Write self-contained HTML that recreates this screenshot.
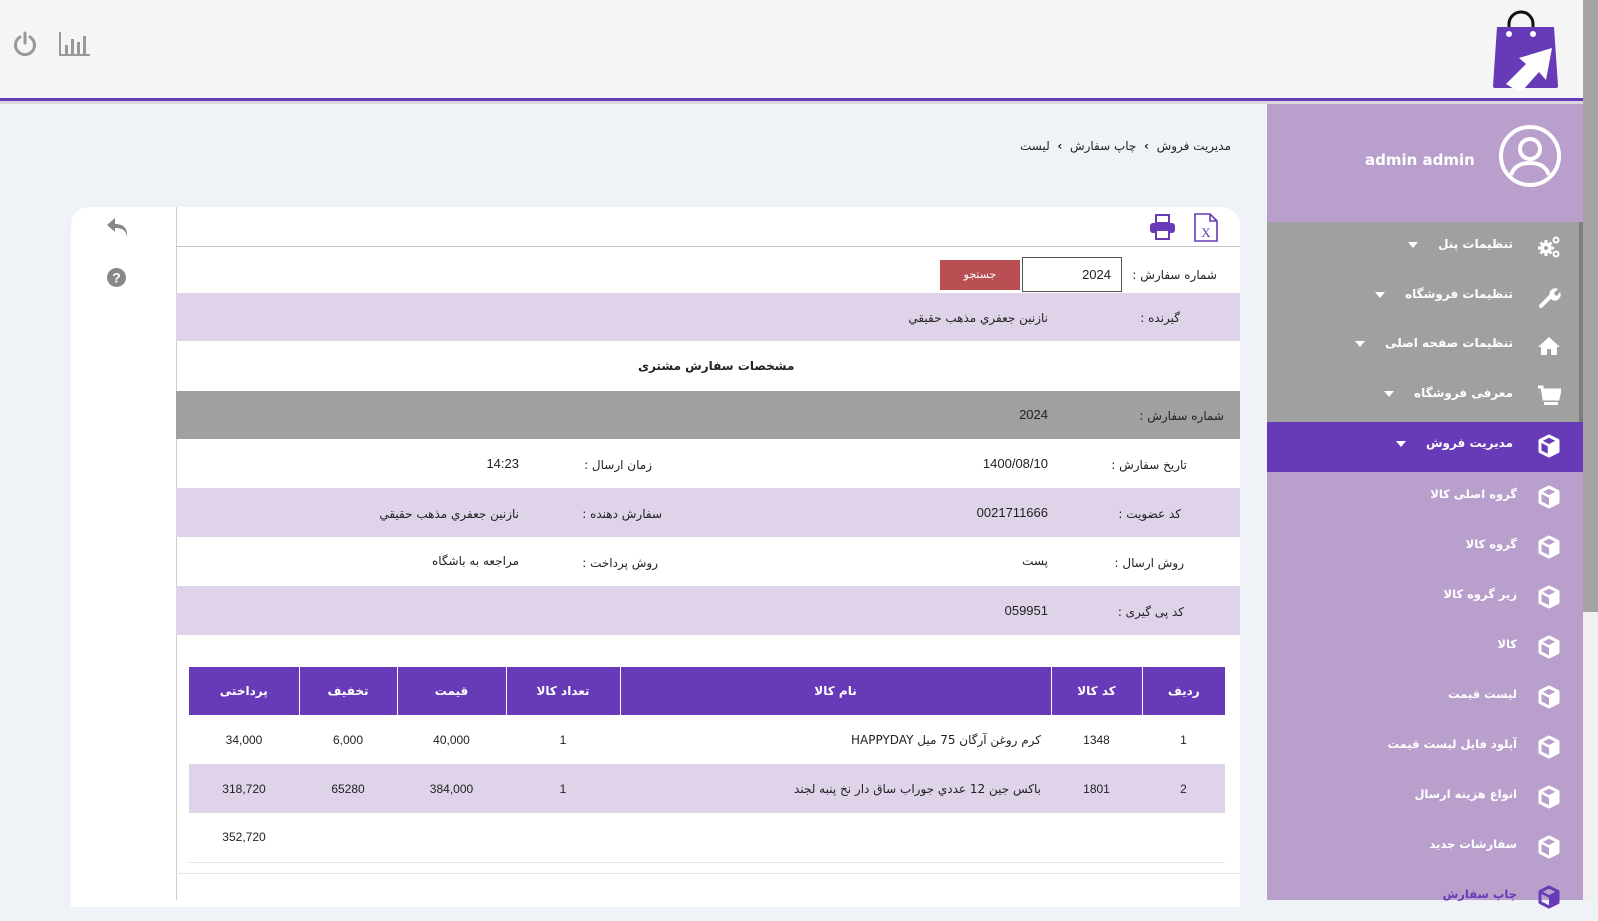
<!DOCTYPE html>
<html><head><meta charset="utf-8"><style>
*{margin:0;padding:0;box-sizing:border-box}
body{width:1598px;height:900px;overflow:hidden;background:#eff2f7;font-family:"DejaVu Sans","Liberation Sans",sans-serif;font-size:12px;color:#222;position:relative}
.a{position:absolute}
.t{position:absolute;white-space:nowrap;direction:rtl}
.r{position:absolute;left:176px;width:1064px}
.lav{background:#ded3e8}
.mi{position:absolute;left:1267px;width:316px;height:50px;color:#fff;font-weight:bold;font-size:12px}
.mi .tx{position:absolute;right:70px;top:16px;direction:rtl;white-space:nowrap}
.mi svg{position:absolute;right:22px;top:14px}
.car{display:inline-block;vertical-align:middle;margin-right:20px;width:0;height:0;border-left:5px solid transparent;border-right:5px solid transparent;border-top:6px solid #fff}
.sub .tx{font-size:11.5px;right:66px}
th,td{font-size:12px}
</style></head><body>
<div class="a" style="left:0;top:0;width:1583px;height:98px;background:#f5f5f5"></div>
<div class="a" style="left:0;top:98px;width:1583px;height:3px;background:#673ab7"></div>
<div class="a" style="left:0;top:101px;width:1583px;height:3px;background:#d6d6dc"></div>
<svg class="a" style="left:12px;top:31px" width="26" height="26" viewBox="0 0 26 26"><path d="M8 6A9.5 9.5 0 1 0 18 6" fill="none" stroke="#999" stroke-width="3" stroke-linecap="round"/><line x1="13" y1="2" x2="13" y2="12" stroke="#999" stroke-width="3" stroke-linecap="round"/></svg>
<svg class="a" style="left:59px;top:31px" width="32" height="26" viewBox="0 0 32 26"><path d="M1 1V24H31" fill="none" stroke="#999" stroke-width="2"/><rect x="6" y="14" width="3" height="9" fill="#999"/><rect x="12" y="8" width="3" height="15" fill="#999"/><rect x="18" y="11" width="3" height="12" fill="#999"/><rect x="24" y="5" width="3" height="18" fill="#999"/></svg>
<svg class="a" style="left:1490px;top:10px" width="72" height="80" viewBox="0 0 72 80"><path d="M19 24V14a12 12 0 0 1 24 0V24" fill="none" stroke="#111" stroke-width="3"/><path d="M7 17H64L68 76Q68 78 66 78H5Q3 78 3 76Z" fill="#673ab7"/><circle cx="19" cy="24" r="3" fill="#fff"/><circle cx="43" cy="24" r="3" fill="#fff"/><path d="M16 74L36 54 29 48 62 38 56 70 49 62 33 80 26 80Z" fill="#fff"/></svg>
<div class="a" style="left:1583px;top:0;width:15px;height:900px;background:#f0f0f0"></div>
<div class="a" style="left:1583px;top:0;width:15px;height:612px;background:#a3a3a3"></div>
<div class="a" style="left:1267px;top:104px;width:316px;height:118px;background:#b9a0cc"></div>
<div class="t" style="left:1365px;top:151px;color:#fff;font-weight:bold;font-size:15px;direction:ltr">admin admin</div>
<svg class="a" style="left:1499px;top:125px" width="62" height="62" viewBox="0 0 62 62"><circle cx="31" cy="31" r="29" fill="none" stroke="#fff" stroke-width="4"/><circle cx="31" cy="24" r="10" fill="none" stroke="#fff" stroke-width="4"/><path d="M12 50Q16 38 31 38Q46 38 50 50" fill="none" stroke="#fff" stroke-width="4"/></svg>
<div class="a" style="left:1267px;top:222px;width:316px;height:200px;background:#a0a0a0"></div>
<div class="a" style="left:1579px;top:222px;width:4px;height:200px;background:#7d7d7d"></div>
<div class="a" style="left:1267px;top:422px;width:316px;height:50px;background:#673ab7"></div>
<div class="a" style="left:1267px;top:472px;width:316px;height:428px;background:#b9a0cc"></div>

<div class="mi" style="top:221px"><svg width="24" height="24" viewBox="0 0 24 24"><circle cx="9" cy="13" r="5.5" fill="#fff"/><g stroke="#fff" stroke-width="3"><line x1="9" y1="5" x2="9" y2="21"/><line x1="1" y1="13" x2="17" y2="13"/><line x1="3.5" y1="7.5" x2="14.5" y2="18.5"/><line x1="14.5" y1="7.5" x2="3.5" y2="18.5"/></g><circle cx="9" cy="13" r="2" fill="#a0a0a0"/><circle cx="19" cy="5" r="2.5" fill="none" stroke="#fff" stroke-width="2"/><circle cx="19" cy="19" r="2.5" fill="none" stroke="#fff" stroke-width="2"/></svg><span class="tx">تنظیمات پنل<span class="car"></span></span></div>
<div class="mi" style="top:271px"><svg width="24" height="24" viewBox="0 0 24 24"><path d="M4 21L13 12" stroke="#fff" stroke-width="4" stroke-linecap="round"/><path d="M13 12a6 6 0 0 1 8-8l-4 4 1 2 2 1 3-4a6 6 0 0 1-8 8" fill="#fff"/></svg><span class="tx">تنظیمات فروشگاه<span class="car"></span></span></div>
<div class="mi" style="top:320px"><svg width="24" height="24" viewBox="0 0 24 24"><path d="M12 3L1 13h3v8h6v-6h4v6h6v-8h3Z" fill="#fff"/></svg><span class="tx">تنظیمات صفحه اصلی<span class="car"></span></span></div>
<div class="mi" style="top:370px"><svg width="24" height="24" viewBox="0 0 24 24"><path d="M1 3h4l2 12h14l2-9H7" fill="none" stroke="#fff" stroke-width="3"/><rect x="7" y="7" width="14" height="7" fill="#fff"/><rect x="7" y="18" width="14" height="3" fill="#fff"/></svg><span class="tx">معرفی فروشگاه<span class="car"></span></span></div>
<div class="mi" style="top:420px"><svg width="24" height="24" viewBox="0 0 24 24"><path d="M12 2L21 6.5V17.5L12 22 3 17.5V6.5Z" fill="none" stroke="#fff" stroke-width="3" stroke-linejoin="round"/><path d="M3.5 7L12 11.5 20.5 7M12 11.5V22" fill="none" stroke="#fff" stroke-width="2.5"/><path d="M12 11.5L20 7.5V17L12 21Z" fill="#fff"/></svg><span class="tx">مدیریت فروش<span class="car"></span></span></div>

<div class="mi sub" style="top:471px"><svg width="24" height="24" viewBox="0 0 24 24"><path d="M12 2L21 6.5V17.5L12 22 3 17.5V6.5Z" fill="none" stroke="#fff" stroke-width="3" stroke-linejoin="round"/><path d="M12 11.5L20 7.5V17L12 21Z" fill="#fff"/><path d="M3.5 7L12 11.5 20.5 7" fill="none" stroke="#fff" stroke-width="2.5"/></svg><span class="tx">گروه اصلی کالا</span></div>
<div class="mi sub" style="top:521px"><svg width="24" height="24" viewBox="0 0 24 24"><path d="M12 2L21 6.5V17.5L12 22 3 17.5V6.5Z" fill="none" stroke="#fff" stroke-width="3" stroke-linejoin="round"/><path d="M12 11.5L20 7.5V17L12 21Z" fill="#fff"/><path d="M3.5 7L12 11.5 20.5 7" fill="none" stroke="#fff" stroke-width="2.5"/></svg><span class="tx">گروه کالا</span></div>
<div class="mi sub" style="top:571px"><svg width="24" height="24" viewBox="0 0 24 24"><path d="M12 2L21 6.5V17.5L12 22 3 17.5V6.5Z" fill="none" stroke="#fff" stroke-width="3" stroke-linejoin="round"/><path d="M12 11.5L20 7.5V17L12 21Z" fill="#fff"/><path d="M3.5 7L12 11.5 20.5 7" fill="none" stroke="#fff" stroke-width="2.5"/></svg><span class="tx">زیر گروه کالا</span></div>
<div class="mi sub" style="top:621px"><svg width="24" height="24" viewBox="0 0 24 24"><path d="M12 2L21 6.5V17.5L12 22 3 17.5V6.5Z" fill="none" stroke="#fff" stroke-width="3" stroke-linejoin="round"/><path d="M12 11.5L20 7.5V17L12 21Z" fill="#fff"/><path d="M3.5 7L12 11.5 20.5 7" fill="none" stroke="#fff" stroke-width="2.5"/></svg><span class="tx">کالا</span></div>
<div class="mi sub" style="top:671px"><svg width="24" height="24" viewBox="0 0 24 24"><path d="M12 2L21 6.5V17.5L12 22 3 17.5V6.5Z" fill="none" stroke="#fff" stroke-width="3" stroke-linejoin="round"/><path d="M12 11.5L20 7.5V17L12 21Z" fill="#fff"/><path d="M3.5 7L12 11.5 20.5 7" fill="none" stroke="#fff" stroke-width="2.5"/></svg><span class="tx">لیست قیمت</span></div>
<div class="mi sub" style="top:721px"><svg width="24" height="24" viewBox="0 0 24 24"><path d="M12 2L21 6.5V17.5L12 22 3 17.5V6.5Z" fill="none" stroke="#fff" stroke-width="3" stroke-linejoin="round"/><path d="M12 11.5L20 7.5V17L12 21Z" fill="#fff"/><path d="M3.5 7L12 11.5 20.5 7" fill="none" stroke="#fff" stroke-width="2.5"/></svg><span class="tx">آپلود فایل لیست قیمت</span></div>
<div class="mi sub" style="top:771px"><svg width="24" height="24" viewBox="0 0 24 24"><path d="M12 2L21 6.5V17.5L12 22 3 17.5V6.5Z" fill="none" stroke="#fff" stroke-width="3" stroke-linejoin="round"/><path d="M12 11.5L20 7.5V17L12 21Z" fill="#fff"/><path d="M3.5 7L12 11.5 20.5 7" fill="none" stroke="#fff" stroke-width="2.5"/></svg><span class="tx">انواع هزینه ارسال</span></div>
<div class="mi sub" style="top:821px"><svg width="24" height="24" viewBox="0 0 24 24"><path d="M12 2L21 6.5V17.5L12 22 3 17.5V6.5Z" fill="none" stroke="#fff" stroke-width="3" stroke-linejoin="round"/><path d="M12 11.5L20 7.5V17L12 21Z" fill="#fff"/><path d="M3.5 7L12 11.5 20.5 7" fill="none" stroke="#fff" stroke-width="2.5"/></svg><span class="tx">سفارشات جدید</span></div>
<div class="mi sub" style="top:871px"><svg width="24" height="24" viewBox="0 0 24 24"><path d="M12 2L21 6.5V17.5L12 22 3 17.5V6.5Z" fill="none" stroke="#673ab7" stroke-width="3" stroke-linejoin="round"/><path d="M12 11.5L20 7.5V17L12 21Z" fill="#673ab7"/><path d="M3.5 7L12 11.5 20.5 7" fill="none" stroke="#673ab7" stroke-width="2.5"/></svg><span class="tx" style="color:#673ab7">چاپ سفارش</span></div>

<div class="t" style="right:367px;top:139px;font-size:12px">مدیریت فروش &nbsp;<b>›</b>&nbsp; چاپ سفارش &nbsp;<b>›</b>&nbsp; لیست</div>

<div class="a" style="left:71px;top:207px;width:1169px;height:700px;background:#fff;border-radius:18px 18px 0 0"></div>
<div class="a" style="left:176px;top:207px;width:1px;height:693px;background:#cfcfcf"></div>
<div class="a" style="left:176px;top:246px;width:1064px;height:1px;background:#c4c4c4"></div>
<svg class="a" style="left:106px;top:216px" width="24" height="22" viewBox="0 0 24 22"><path d="M9 2L1 9l8 7v-4c7 0 11 2 12 9 1-8-3-13-12-13Z" fill="#888"/></svg>
<svg class="a" style="left:107px;top:268px" width="19" height="19" viewBox="0 0 19 19"><circle cx="9.5" cy="9.5" r="9.5" fill="#888"/><text x="9.5" y="14.5" text-anchor="middle" font-size="14" font-weight="bold" fill="#fff" font-family="Liberation Sans">?</text></svg>
<svg class="a" style="left:1149px;top:214px" width="27" height="26" viewBox="0 0 27 26"><rect x="7" y="1" width="13" height="8" fill="none" stroke="#673ab7" stroke-width="2"/><rect x="1" y="9" width="25" height="10" rx="3" fill="#673ab7"/><rect x="7" y="16" width="13" height="9" fill="#fff" stroke="#673ab7" stroke-width="2"/></svg>
<svg class="a" style="left:1194px;top:213px" width="24" height="29" viewBox="0 0 24 29"><path d="M1 1H16L23 8V28H1Z M16 1V8H23" fill="none" stroke="#673ab7" stroke-width="1.6"/><text x="12" y="24" text-anchor="middle" font-size="13" fill="#673ab7" font-family="Liberation Serif">X</text></svg>

<div class="t" style="right:381px;top:268px">شماره سفارش :</div>
<div class="a" style="left:1022px;top:257px;width:100px;height:35px;border:1px solid #555;background:#fff"></div>
<div class="a" style="left:1022px;top:267px;width:89px;text-align:right;font-family:'Liberation Sans';font-size:13px">2024</div>
<div class="a" style="left:940px;top:260px;width:80px;height:30px;background:#b94f52;color:#fff;text-align:center;line-height:30px;font-size:11px">جستجو</div>

<div class="r lav" style="top:293px;height:48px"></div>
<div class="t" style="right:418px;top:311px">گیرنده :</div>
<div class="t" style="right:550px;top:311px">نازنین جعفري مذهب حقیقي</div>
<div class="t" style="left:638px;top:359px;font-weight:bold">مشخصات سفارش مشتری</div>

<div class="r" style="top:391px;height:48px;background:#a0a0a0"></div>
<div class="t" style="right:374px;top:409px">شماره سفارش :</div>
<div class="t" style="right:550px;top:407px;font-family:'Liberation Sans';font-size:13px">2024</div>

<div class="t" style="right:411px;top:458px">تاریخ سفارش :</div>
<div class="t" style="right:550px;top:456px;font-family:'Liberation Sans';font-size:13px;direction:ltr">1400/08/10</div>
<div class="t" style="right:946px;top:458px">زمان ارسال :</div>
<div class="t" style="right:1079px;top:456px;font-family:'Liberation Sans';font-size:13px">14:23</div>

<div class="r lav" style="top:488px;height:49px"></div>
<div class="t" style="right:417px;top:507px">کد عضویت :</div>
<div class="t" style="right:550px;top:505px;font-family:'Liberation Sans';font-size:13px">0021711666</div>
<div class="t" style="right:936px;top:507px">سفارش دهنده :</div>
<div class="t" style="right:1079px;top:507px">نازنین جعفري مذهب حقیقي</div>

<div class="t" style="right:414px;top:556px">روش ارسال :</div>
<div class="t" style="right:550px;top:554px">پست</div>
<div class="t" style="right:940px;top:556px">روش پرداخت :</div>
<div class="t" style="right:1079px;top:554px">مراجعه به باشگاه</div>

<div class="r lav" style="top:586px;height:49px"></div>
<div class="t" style="right:414px;top:605px">کد پی گیری :</div>
<div class="t" style="right:550px;top:603px;font-family:'Liberation Sans';font-size:13px">059951</div>

<table class="a" style="left:189px;top:667px;width:1036px;border-collapse:collapse;direction:rtl">
<colgroup><col style="width:83px"><col style="width:91px"><col style="width:431px"><col style="width:114px"><col style="width:109px"><col style="width:98px"><col style="width:110px"></colgroup>
<tr style="height:48px;background:#673ab7;color:#fff;font-weight:bold"><th style="border-left:1px solid #fff">ردیف</th><th style="border-left:1px solid #fff">کد کالا</th><th style="border-left:1px solid #fff">نام کالا</th><th style="border-left:1px solid #fff">تعداد کالا</th><th style="border-left:1px solid #fff">قیمت</th><th style="border-left:1px solid #fff">تخفیف</th><th>پرداختی</th></tr>
<tr style="height:49px;text-align:center;font-family:'Liberation Sans','DejaVu Sans';font-size:13px"><td>1</td><td>1348</td><td style="text-align:right;padding-right:10px;font-family:'DejaVu Sans'">کرم روغن آرگان 75 میل HAPPYDAY</td><td>1</td><td>40,000</td><td>6,000</td><td>34,000</td></tr>
<tr class="lav" style="height:49px;text-align:center;font-family:'Liberation Sans','DejaVu Sans';font-size:13px"><td>2</td><td>1801</td><td style="text-align:right;padding-right:10px;font-family:'DejaVu Sans'">باکس جین 12 عددي جوراب ساق دار نخ پنبه لجند</td><td>1</td><td>384,000</td><td>65280</td><td>318,720</td></tr>
<tr style="height:49px;text-align:center;font-family:'Liberation Sans';font-size:13px;border-bottom:1px solid #e4e4e4"><td></td><td></td><td></td><td></td><td></td><td></td><td>352,720</td></tr>
</table>
<div class="a" style="left:176px;top:873px;width:1064px;height:1px;background:#e4e4e4"></div>
</body></html>
